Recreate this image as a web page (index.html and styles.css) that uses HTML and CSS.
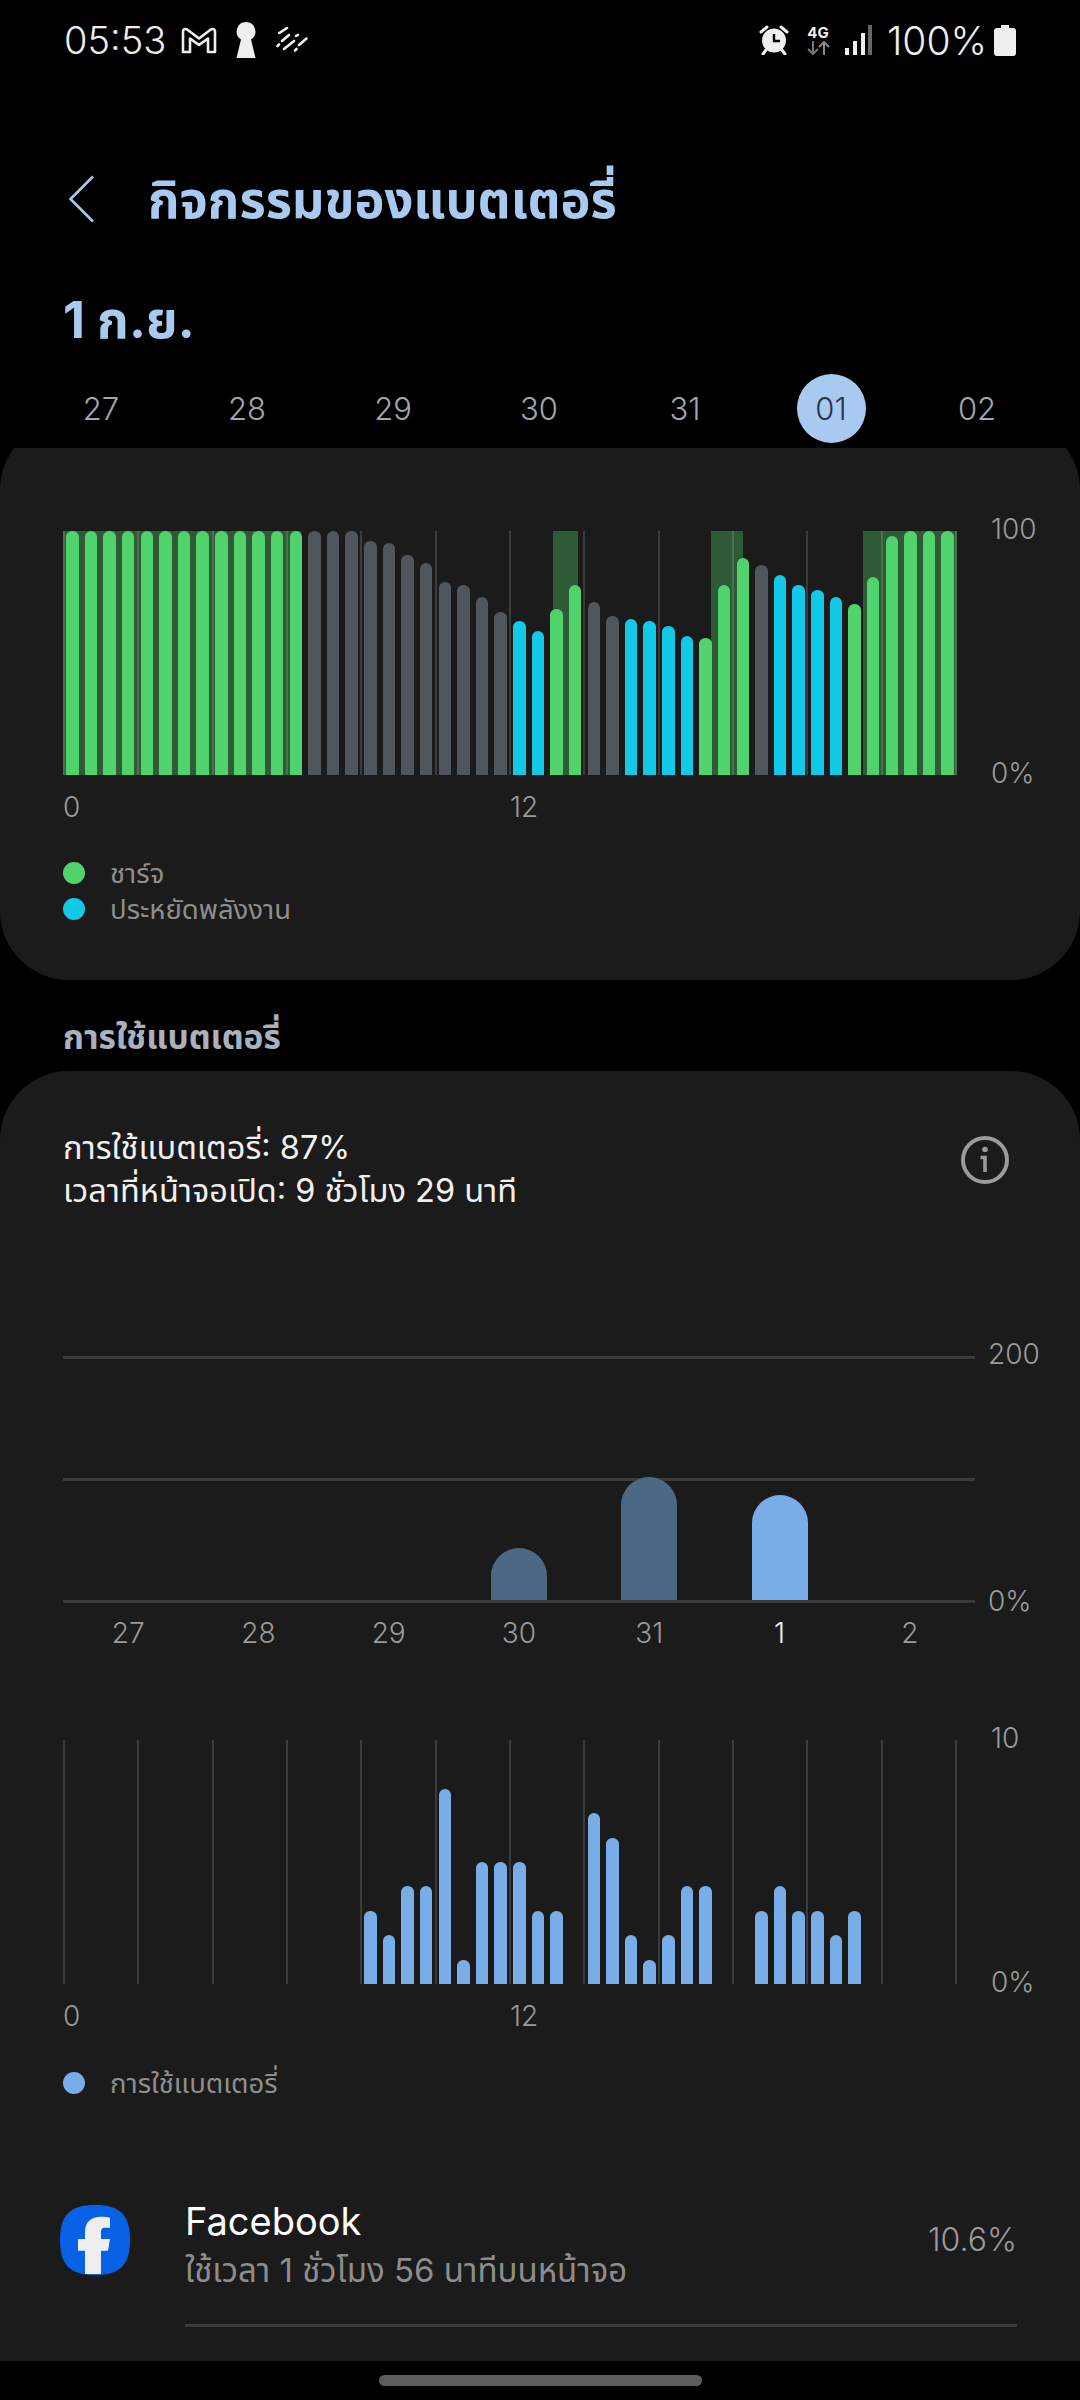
FILE: index.html
```html
<!DOCTYPE html>
<html lang="th">
<head>
    <meta charset="UTF-8">
    <meta name="viewport" content="width=device-width, initial-scale=1.0">
    <title>กิจกรรมของแบตเตอรี่</title>
    <link rel="stylesheet" href="styles.css">
</head>
<body>
    <div class="screen">
        <div class="status">
            <div class="status-left">
                <span class="time">05:53</span>
                <svg class="ic-gmail" viewBox="0 0 36 27"><path d="M2 25V4.500Q2 2 4.500 2Q5.500 2 6.500 2.800L18 11.500 29.500 2.800Q30.500 2 31.500 2 34 2 34 4.500V25H27V11.500L18 18 9 11.500V25Z" fill="none" stroke="#eee" stroke-width="2.600" stroke-linejoin="round"/></svg>
                <svg class="ic-key" viewBox="0 0 20 36"><path d="M10 0a9.500 9.500 0 0 1 5 17.500L19.500 36H.5L5 17.500A9.500 9.500 0 0 1 10 0Z" fill="#eee"/></svg>
                <svg class="ic-slash" viewBox="0 0 32 26" stroke="#eee" stroke-width="2.600" stroke-linecap="round"><path d="M3.300 6 11 1M1.500 19 3 17.500M8 22 18 14M6 14 13 8M20 9 22 7.800M19 23.500 20.500 22M23 18 30.500 11.500"/></svg>
            </div>
            <div class="status-right">
                <svg class="ic-alarm" viewBox="0 0 30 30"><circle cx="15" cy="15.500" r="12" fill="#eee"/><path d="M15 9v7h6" fill="none" stroke="#000" stroke-width="2.400"/><path d="M2 7 8 2M28 7 22 2M7 25 4 29M23 25 26 29" stroke="#eee" stroke-width="3" stroke-linecap="round"/></svg>
                <div class="net">
                    <span class="net-4g">4G</span>
                    <svg class="ic-arrows" viewBox="0 0 24 14" fill="none" stroke="#777" stroke-width="2"><path d="M7 0V13M2 8 7 13 12 8"/><path d="M18 14V1M13 6 18 1 23 6" stroke="#8a8a8a"/></svg>
                </div>
                <svg class="ic-signal" viewBox="0 0 28 30"><rect x="1" y="23" width="4" height="7" fill="#eee"/><rect x="9" y="16" width="4" height="14" fill="#eee"/><rect x="17" y="8" width="4" height="22" fill="#eee"/><rect x="24" y="0" width="4" height="30" fill="#666"/></svg>
                <span class="pct">100%</span>
                <svg class="ic-batt" viewBox="0 0 22 31"><path d="M7 0h8v3h4q3 0 3 3v22q0 3-3 3H3q-3 0-3-3V6q0-3 3-3h4Z" fill="#eee"/></svg>
            </div>
        </div>

        <div class="appbar">
            <svg class="ic-back" viewBox="0 0 27 48"><path d="M25 1.500 2.500 24 25 46.500" fill="none" stroke="#a9caf0" stroke-width="2.600"/></svg>
            <h1>กิจกรรมของแบตเตอรี่</h1>
        </div>

        <div class="date">1 ก.ย.</div>

        <div class="days">
            <span>27</span><span>28</span><span>29</span><span>30</span><span>31</span><span><em>01</em></span><span>02</span>
        </div>

        <div class="clip">
            <div class="card card-top">
                <div class="chart chart-level">
                    <div class="plot plot-level">
                        <div class="band" style="left:0;width:26.6%"></div>
                        <div class="band" style="left:54.8%;width:2.8%"></div>
                        <div class="band" style="left:72.5%;width:3.6%"></div>
                        <div class="band" style="left:89.5%;width:10.5%"></div>
                        <div class="grid"><i></i><i></i><i></i><i></i><i></i><i></i><i></i><i></i><i></i><i></i><i></i><i></i><i></i></div>
                        <div class="bars">
                            <b class="g" style="height:100%"></b><b class="g" style="height:100%"></b><b class="g" style="height:100%"></b><b class="g" style="height:100%"></b>
                            <b class="g" style="height:100%"></b><b class="g" style="height:100%"></b><b class="g" style="height:100%"></b><b class="g" style="height:100%"></b>
                            <b class="g" style="height:100%"></b><b class="g" style="height:100%"></b><b class="g" style="height:100%"></b><b class="g" style="height:100%"></b>
                            <b class="g" style="height:100%"></b><b class="k" style="height:100%"></b><b class="k" style="height:100%"></b><b class="k" style="height:100%"></b>
                            <b class="k" style="height:96%"></b><b class="k" style="height:95%"></b><b class="k" style="height:90%"></b><b class="k" style="height:87%"></b>
                            <b class="k" style="height:79%"></b><b class="k" style="height:78%"></b><b class="k" style="height:73%"></b><b class="k" style="height:67%"></b>
                            <b class="c" style="height:63%"></b><b class="c" style="height:59%"></b><b class="g" style="height:68%"></b><b class="g" style="height:78%"></b>
                            <b class="k" style="height:71%"></b><b class="k" style="height:65%"></b><b class="c" style="height:64%"></b><b class="c" style="height:63%"></b>
                            <b class="c" style="height:61%"></b><b class="c" style="height:57%"></b><b class="g" style="height:56%"></b><b class="g" style="height:78%"></b>
                            <b class="g" style="height:89%"></b><b class="k" style="height:86%"></b><b class="c" style="height:82%"></b><b class="c" style="height:78%"></b>
                            <b class="c" style="height:76%"></b><b class="c" style="height:73%"></b><b class="g" style="height:70%"></b><b class="g" style="height:81%"></b>
                            <b class="g" style="height:98%"></b><b class="g" style="height:100%"></b><b class="g" style="height:100%"></b><b class="g" style="height:100%"></b>
                        </div>
                    </div>
                    <div class="yaxis"><span>100</span><span>0%</span></div>
                </div>
                <div class="xaxis"><span>0</span><span>12</span></div>
                <ul class="legend">
                    <li><i class="dot dot-g"></i>ชาร์จ</li>
                    <li><i class="dot dot-c"></i>ประหยัดพลังงาน</li>
                </ul>
            </div>
        </div>

        <h2 class="section">การใช้แบตเตอรี่</h2>

        <div class="card card-use">
            <div class="summary">
                <p>การใช้แบตเตอรี่: 87%<br>เวลาที่หน้าจอเปิด: 9 ชั่วโมง 29 นาที</p>
                <svg class="ic-info" viewBox="0 0 48 48"><circle cx="24" cy="24" r="22" fill="none" stroke="#9b9b9b" stroke-width="4"/><circle cx="24" cy="13.500" r="2.800" fill="#9b9b9b"/><path d="M19.500 21.500H24V36" fill="none" stroke="#9b9b9b" stroke-width="3.600"/></svg>
            </div>

            <div class="chart chart-days">
                <div class="plot plot-days">
                    <div class="day-bars">
                        <span></span><span></span><span></span>
                        <span><b class="dim" style="height:43%"></b></span>
                        <span><b class="dim" style="height:102%"></b></span>
                        <span><b class="now" style="height:87%"></b></span>
                        <span></span>
                    </div>
                </div>
                <div class="yaxis yaxis-days"><span>200</span><span>0%</span></div>
            </div>
            <div class="day-labels">
                <span>27</span><span>28</span><span>29</span><span>30</span><span>31</span><span class="today">1</span><span>2</span>
            </div>

            <div class="chart chart-hours">
                <div class="plot plot-level">
                    <div class="grid"><i></i><i></i><i></i><i></i><i></i><i></i><i></i><i></i><i></i><i></i><i></i><i></i><i></i></div>
                    <div class="bars">
                        <b></b><b></b><b></b><b></b><b></b><b></b><b></b><b></b>
                        <b></b><b></b><b></b><b></b><b></b><b></b><b></b><b></b>
                        <b class="u" style="height:30%"></b><b class="u" style="height:20%"></b><b class="u" style="height:40%"></b><b class="u" style="height:40%"></b>
                        <b class="u" style="height:80%"></b><b class="u" style="height:10%"></b><b class="u" style="height:50%"></b><b class="u" style="height:50%"></b>
                        <b class="u" style="height:50%"></b><b class="u" style="height:30%"></b><b class="u" style="height:30%"></b><b></b>
                        <b class="u" style="height:70%"></b><b class="u" style="height:60%"></b><b class="u" style="height:20%"></b><b class="u" style="height:10%"></b>
                        <b class="u" style="height:20%"></b><b class="u" style="height:40%"></b><b class="u" style="height:40%"></b><b></b>
                        <b></b><b class="u" style="height:30%"></b><b class="u" style="height:40%"></b><b class="u" style="height:30%"></b>
                        <b class="u" style="height:30%"></b><b class="u" style="height:20%"></b><b class="u" style="height:30%"></b><b></b>
                        <b></b><b></b><b></b><b></b>
                    </div>
                </div>
                <div class="yaxis"><span>10</span><span>0%</span></div>
            </div>
            <div class="xaxis"><span>0</span><span>12</span></div>
            <ul class="legend legend-use">
                <li><i class="dot dot-u"></i>การใช้แบตเตอรี่</li>
            </ul>

            <div class="app-row">
                <svg class="ic-fb" viewBox="0 0 70 70"><path d="M35 0C60 0 70 10 70 35S60 70 35 70 0 60 0 35 10 0 35 0Z" fill="#0862e6"/><path d="M25 69V45.700H18V34H25V27C25 17 31 11.700 41 11.700 44.500 11.700 47.500 12 50 12.700V22.700H45C41.500 22.700 41 24.500 41 28V34H50L48 45.700H41V69Z" fill="#eee"/></svg>
                <div class="app-main">
                    <div class="app-name">Facebook</div>
                    <div class="app-sub">ใช้เวลา 1 ชั่วโมง 56 นาทีบนหน้าจอ</div>
                </div>
                <div class="app-pct">10.6%</div>
            </div>
            <div class="divider"></div>
        </div>

        <div class="navbar"><div class="handle"></div></div>
    </div>
</body>
</html>
```
FILE: styles.css
```css
* { box-sizing: border-box; }
html, body { margin: 0; background: #000; }
body { font-family: Inter, Roboto, "Noto Sans Thai", "Noto Sans", sans-serif; color: #eee; }
.screen { width: 1080px; height: 2400px; overflow: hidden; display: flex; flex-direction: column; position: relative; }
.screen > * { flex: none; }

/* status bar */
.status { height: 80px; padding: 0 64px; display: flex; justify-content: space-between; align-items: center; }
.status-left, .status-right { display: flex; align-items: center; }
.time { font-size: 38px; width: 103px; font-weight: 300; }
.pct { font-size: 39px; margin-left: 15px; width: 100px; font-weight: 300; white-space: nowrap; }
.ic-gmail { width: 36px; height: 27px; margin-left: 14px; }
.ic-key { width: 20px; height: 36px; margin-left: 19px; }
.ic-slash { width: 32px; height: 26px; margin-left: 20px; }
.ic-alarm { width: 30px; height: 30px; }
.net { width: 24px; margin-left: 17px; display: flex; flex-direction: column; align-items: center; }
.net-4g { font-size: 15px; font-weight: 700; line-height: 16px; }
.ic-arrows { width: 24px; height: 14px; }
.ic-signal { width: 28px; height: 30px; margin-left: 14px; }
.ic-batt { width: 22px; height: 31px; margin-left: 7px; }

/* header */
.appbar { height: 68px; margin-top: 85px; padding-left: 68px; display: flex; align-items: center; }
.ic-back { width: 27px; height: 48px; }
h1 { margin: 0 0 0 53px; padding-top: 6px; font-size: 50.600px; font-weight: 700; color: #a9caf0; }
.date { margin-top: 57px; padding-left: 63px; font-size: 51px; line-height: 60px; font-weight: 700; color: #a9caf0; }
.days { height: 69px; margin-top: 24px; padding: 0 30px 0 28px; display: flex; }
.days span { flex: 1; display: flex; justify-content: center; align-items: center; font-size: 31px; font-weight: 300; color: #a0a7b0; }
.days em { width: 69px; height: 69px; border-radius: 50%; background: #a8c9f0; color: #26364a; font-style: normal; display: flex; justify-content: center; align-items: center; }

/* cards */
.clip { height: 532px; margin-top: 5px; overflow: hidden; }
.card { background: #1b1b1b; border-radius: 69px; padding: 0 63px; }
.card-top { height: 559px; margin-top: -27px; padding-top: 110px; }
.section { margin: 0; height: 91px; padding: 37px 0 0 63px; font-size: 33.500px; line-height: 40px; font-weight: 700; color: #a9b1bc; }
.card-use { height: 1400px; border-radius: 69px 69px 0 0; padding-top: 55px; }

/* charts */
.chart { display: flex; }
.plot { position: relative; flex: none; }
.plot-level { width: 894px; height: 244px; }
.chart-hours { margin-top: 90px; }
.band { position: absolute; top: 0; bottom: 0; background: #2f5a36; }
.grid { position: absolute; inset: 0; display: flex; justify-content: space-between; }
.grid i { width: 2px; background: rgba(255, 255, 255, .14); }
.bars { position: absolute; inset: 0; display: flex; align-items: flex-end; }
.bars b { flex: 1; margin: 0 3.100px; border-radius: 6.200px 6.200px 0 0; }
.bars .g { background: #50d26c; }
.bars .k { background: #51565c; }
.bars .c { background: #12c9e8; }
.bars .u { background: #79ade8; }
.yaxis { width: 84px; padding-left: 34px; margin: -19px 0 -15px; display: flex; flex-direction: column; justify-content: space-between; font-size: 28px; font-weight: 300; line-height: 34px; color: #9a9a9a; flex: none; }
.xaxis { width: 894px; margin-top: 15px; display: flex; font-size: 28px; font-weight: 300; line-height: 34px; color: #9a9a9a; }
.xaxis span { width: 50%; }

.legend { list-style: none; margin: 31px 0 0; padding: 0; font-size: 27.500px; line-height: 36px; color: #8e8e8e; }
.legend li { display: flex; align-items: center; }
.dot { width: 22px; height: 22px; border-radius: 50%; margin-right: 25px; }
.dot-g { background: #50d26c; }
.dot-c { background: #12c9e8; }
.dot-u { background: #79ade8; }
.legend-use { margin-top: 32px; }

.summary { display: flex; justify-content: space-between; align-items: flex-start; padding-right: 8px; }
.summary p { margin: 0; font-size: 32.500px; line-height: 43px; color: #f0f0f0; }
.ic-info { width: 48px; height: 48px; flex: none; margin-top: 10px; }

.chart-days { margin-top: 144px; }
.plot-days { width: 912px; height: 247px; border-top: 3px solid #3a3a3a; border-bottom: 3px solid #3a3a3a; background: linear-gradient(#3a3a3a, #3a3a3a) 0 50% / 100% 3px no-repeat; }
.day-bars { height: 100%; display: flex; align-items: flex-end; }
.day-bars span { flex: 1; height: 50%; display: flex; align-items: flex-end; justify-content: center; }
.day-bars b { width: 56px; border-radius: 28px 28px 0 0; }
.day-bars .dim { background: #4c6885; }
.day-bars .now { background: #79ade8; }
.yaxis-days { width: 66px; padding-left: 13px; }
.day-labels { width: 912px; margin-top: 13px; display: flex; font-size: 28px; font-weight: 300; line-height: 34px; color: #9a9a9a; }
.day-labels span { flex: 1; text-align: center; }
.day-labels .today { color: #f4f4f4; }

.app-row { margin-top: 85px; display: flex; align-items: center; }
.ic-fb { width: 70px; height: 70px; flex: none; margin-left: -3px; }
.app-main { flex: 1; margin-left: 55px; padding-top: 12px; }
.app-name { font-size: 38px; line-height: 46px; color: #fff; }
.app-sub { font-size: 33px; line-height: 46px; margin-top: 3px; color: #8d8d8d; }
.app-pct { font-size: 32px; font-weight: 300; color: #9a9a9a; }
.divider { height: 3px; margin: 31px 0 0 122px; background: #3a3a3a; }

.navbar { position: absolute; left: 0; right: 0; bottom: 0; height: 39px; background: #000; display: flex; justify-content: center; padding-top: 14px; }
.handle { width: 323px; height: 11px; border-radius: 6px; background: #5d5d5d; }
```
